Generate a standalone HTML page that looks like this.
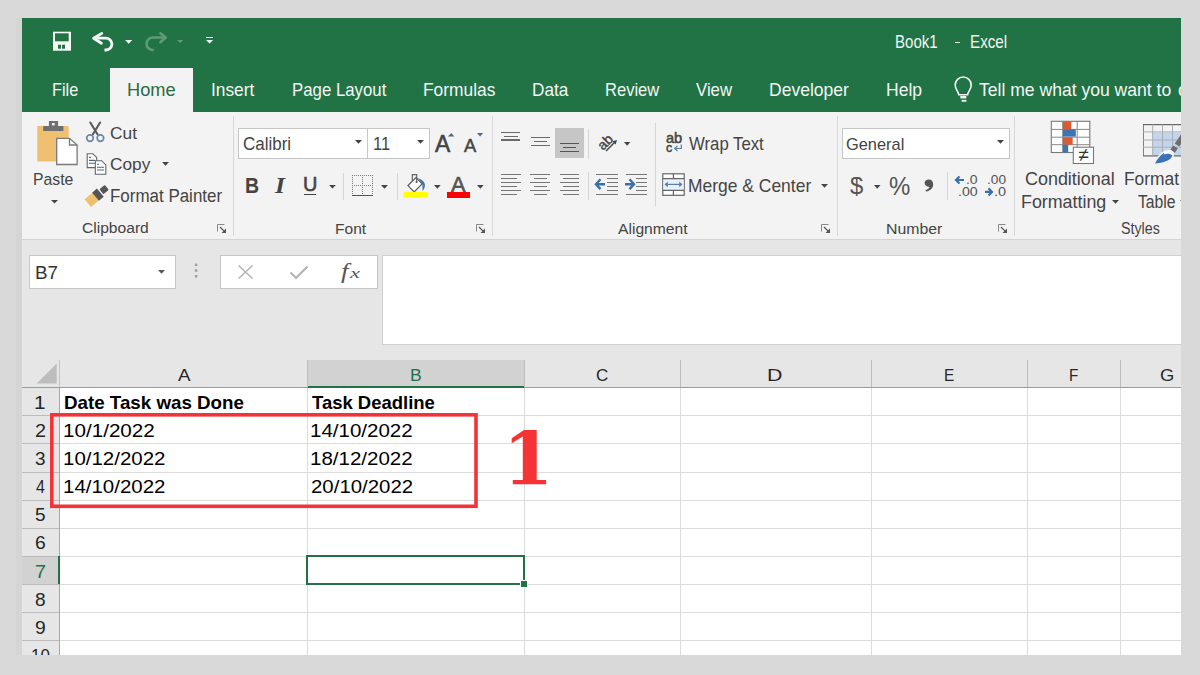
<!DOCTYPE html>
<html><head><meta charset="utf-8"><style>
html,body{margin:0;padding:0;width:1200px;height:675px;overflow:hidden;background:#d9d9d9;position:relative}
.t{position:absolute;white-space:nowrap;line-height:1;transform-origin:0 0;z-index:3}
svg{z-index:2}
#win{position:absolute;left:0;top:0;width:1181px;height:655px;overflow:hidden}
</style></head><body><div id="win">
<div style="position:absolute;left:16px;top:18px;width:6px;height:637px;background:#d5d5d5"></div>
<div style="position:absolute;left:22px;top:18px;width:1159px;height:637px;background:#217346"></div>
<div style="position:absolute;left:22px;top:112px;width:1159px;height:127px;background:#f3f3f3"></div>
<div style="position:absolute;left:22px;top:239px;width:1159px;height:1px;background:#d4d4d4"></div>
<div style="position:absolute;left:22px;top:240px;width:1159px;height:120px;background:#e6e6e6"></div>
<div style="position:absolute;left:110px;top:68px;width:83px;height:44px;background:#f3f3f3"></div>
<div class="t" style="left:894.50px;top:33px;font-size:18.48px;font-family:'Liberation Sans', sans-serif;font-weight:400;transform:scaleX(0.8148);color:#eef6f0;">Book1</div>
<div style="position:absolute;left:954.8px;top:41.6px;width:5.6px;height:1.7px;background:#eef6f0"></div>
<div class="t" style="left:969.78px;top:33px;font-size:18.48px;font-family:'Liberation Sans', sans-serif;font-weight:400;transform:scaleX(0.8235);color:#eef6f0;">Excel</div>
<div class="t" style="left:52.09px;top:82px;font-size:17.97px;font-family:'Liberation Sans', sans-serif;font-weight:400;transform:scaleX(0.9106);color:#f2f7f3;">File</div>
<div class="t" style="left:211.04px;top:82px;font-size:17.97px;font-family:'Liberation Sans', sans-serif;font-weight:400;transform:scaleX(0.9648);color:#f2f7f3;">Insert</div>
<div class="t" style="left:291.65px;top:82px;font-size:17.97px;font-family:'Liberation Sans', sans-serif;font-weight:400;transform:scaleX(0.9358);color:#f2f7f3;">Page Layout</div>
<div class="t" style="left:422.61px;top:82px;font-size:17.97px;font-family:'Liberation Sans', sans-serif;font-weight:400;transform:scaleX(0.9674);color:#f2f7f3;">Formulas</div>
<div class="t" style="left:531.62px;top:82px;font-size:17.97px;font-family:'Liberation Sans', sans-serif;font-weight:400;transform:scaleX(0.9594);color:#f2f7f3;">Data</div>
<div class="t" style="left:604.67px;top:82px;font-size:17.97px;font-family:'Liberation Sans', sans-serif;font-weight:400;transform:scaleX(0.9216);color:#f2f7f3;">Review</div>
<div class="t" style="left:695.92px;top:82px;font-size:17.97px;font-family:'Liberation Sans', sans-serif;font-weight:400;transform:scaleX(0.9339);color:#f2f7f3;">View</div>
<div class="t" style="left:769.10px;top:82px;font-size:17.97px;font-family:'Liberation Sans', sans-serif;font-weight:400;transform:scaleX(0.9757);color:#f2f7f3;">Developer</div>
<div class="t" style="left:885.59px;top:82px;font-size:17.97px;font-family:'Liberation Sans', sans-serif;font-weight:400;transform:scaleX(0.9777);color:#f2f7f3;">Help</div>
<div class="t" style="left:126.84px;top:82px;font-size:17.97px;font-family:'Liberation Sans', sans-serif;font-weight:400;transform:scaleX(1.0143);color:#2b6a45;">Home</div>
<div class="t" style="left:33.14px;top:172px;font-size:16.52px;font-family:'Liberation Sans', sans-serif;font-weight:400;transform:scaleX(0.9565);color:#444;">Paste</div>
<div class="t" style="left:110.13px;top:126px;font-size:15.94px;font-family:'Liberation Sans', sans-serif;font-weight:400;transform:scaleX(1.0873);color:#444;">Cut</div>
<div class="t" style="left:110.14px;top:157px;font-size:16.52px;font-family:'Liberation Sans', sans-serif;font-weight:400;transform:scaleX(1.0463);color:#444;">Copy</div>
<div class="t" style="left:110.24px;top:188px;font-size:17.83px;font-family:'Liberation Sans', sans-serif;font-weight:400;transform:scaleX(0.9506);color:#444;">Format Painter</div>
<div class="t" style="left:82.22px;top:220px;font-size:15.07px;font-family:'Liberation Sans', sans-serif;font-weight:400;transform:scaleX(1.0354);color:#444;">Clipboard</div>
<div class="t" style="left:242.65px;top:135px;font-size:18.91px;font-family:'Liberation Sans', sans-serif;font-weight:400;transform:scaleX(0.8978);color:#444;">Calibri</div>
<div class="t" style="left:372.69px;top:135px;font-size:18.91px;font-family:'Liberation Sans', sans-serif;font-weight:400;transform:scaleX(0.8702);color:#444;">11</div>
<div class="t" style="left:334.96px;top:222px;font-size:14.64px;font-family:'Liberation Sans', sans-serif;font-weight:400;transform:scaleX(1.0631);color:#444;">Font</div>
<div class="t" style="left:688.92px;top:134px;font-size:19.13px;font-family:'Liberation Sans', sans-serif;font-weight:400;transform:scaleX(0.8763);color:#444;">Wrap Text</div>
<div class="t" style="left:687.80px;top:176px;font-size:19.13px;font-family:'Liberation Sans', sans-serif;font-weight:400;transform:scaleX(0.9133);color:#444;">Merge &amp; Center</div>
<div class="t" style="left:618.30px;top:222px;font-size:14.93px;font-family:'Liberation Sans', sans-serif;font-weight:400;transform:scaleX(1.0479);color:#444;">Alignment</div>
<div class="t" style="left:845.78px;top:136px;font-size:17.39px;font-family:'Liberation Sans', sans-serif;font-weight:400;transform:scaleX(0.9427);color:#444;">General</div>
<div class="t" style="left:886.13px;top:222px;font-size:14.06px;font-family:'Liberation Sans', sans-serif;font-weight:400;transform:scaleX(1.1287);color:#444;">Number</div>
<div class="t" style="left:1025.30px;top:171px;font-size:17.68px;font-family:'Liberation Sans', sans-serif;font-weight:400;transform:scaleX(1.0142);color:#444;">Conditional</div>
<div class="t" style="left:1020.57px;top:193px;font-size:18.12px;font-family:'Liberation Sans', sans-serif;font-weight:400;transform:scaleX(0.9849);color:#444;">Formatting</div>
<div class="t" style="left:1124.11px;top:171px;font-size:17.68px;font-family:'Liberation Sans', sans-serif;font-weight:400;transform:scaleX(0.9833);color:#444;">Format</div>
<div class="t" style="left:1138.29px;top:193px;font-size:18.12px;font-family:'Liberation Sans', sans-serif;font-weight:400;transform:scaleX(0.8690);color:#444;">Table</div>
<div class="t" style="left:1121.36px;top:221px;font-size:15.65px;font-family:'Liberation Sans', sans-serif;font-weight:400;transform:scaleX(0.9118);color:#444;">Styles</div>
<svg style="position:absolute;left:50px;top:28px" width="30" height="26" viewBox="0 0 30 26"><rect x="3" y="3.7" width="18" height="19" fill="#f4faf6"/><rect x="5" y="5.3" width="13.7" height="8" fill="#217346"/><rect x="8" y="16.7" width="3" height="4" fill="#217346"/><rect x="12" y="16.7" width="3" height="4" fill="#217346"/></svg>
<svg style="position:absolute;left:88px;top:28px" width="30" height="26" viewBox="0 0 30 26"><path d="M13.8 5.4 L5.6 10.2 L13.4 15.2" fill="none" stroke="#f4faf6" stroke-width="2.8" stroke-linejoin="round" stroke-linecap="round"/><path d="M6.5 10.2 H18 A5.9 5.9 0 0 1 18 22 H16.5" fill="none" stroke="#f4faf6" stroke-width="2.8"/></svg>
<svg style="position:absolute;left:124.25px;top:38.85px" width="9.3" height="5.7" viewBox="0 0 9.3 5.7"><path d="M1 1 H8.3 L4.65 4.7 Z" fill="#f4faf6"/></svg>
<svg style="position:absolute;left:140px;top:28px" width="30" height="26" viewBox="0 0 30 26"><path d="M20.4 5.3 L25.8 9.5 L20.4 14.2" fill="none" stroke="#5d9c77" stroke-width="2.6" stroke-linejoin="round" stroke-linecap="round"/><path d="M25 9.5 H12.8 A6.25 6.25 0 0 0 12.8 22 H13.8" fill="none" stroke="#5d9c77" stroke-width="2.6"/></svg>
<svg style="position:absolute;left:176.45px;top:39.0px" width="8.3" height="5" viewBox="0 0 8.3 5"><path d="M1 1 H7.3 L4.15 4 Z" fill="#5d9c77"/></svg>
<div style="position:absolute;left:205.8px;top:36.6px;width:7.1px;height:1.4px;background:#f4faf6"></div>
<svg style="position:absolute;left:204.85px;top:39.0px" width="9.1" height="5.6" viewBox="0 0 9.1 5.6"><path d="M1 1 H8.1 L4.55 4.6 Z" fill="#f4faf6"/></svg>
<svg style="position:absolute;left:952px;top:74px" width="24" height="30" viewBox="0 0 24 30"><path d="M6.8 20.8 C6.5 17.5 3.2 15.5 3.2 11 A8 8 0 0 1 19.2 11 C19.2 15.5 15.9 17.5 15.6 20.8 Z" fill="none" stroke="#f4faf6" stroke-width="1.6"/><rect x="8.3" y="22" width="6" height="2.4" fill="#f4faf6"/><rect x="9.6" y="25.8" width="4.8" height="1.9" fill="#f4faf6"/></svg>
<div class="t" style="left:979.15px;top:81px;font-size:18.84px;font-family:'Liberation Sans', sans-serif;font-weight:400;transform:scaleX(0.9324);color:#f2f7f3;">Tell me what you want to</div>
<div class="t" style="left:1177.85px;top:81px;font-size:18.84px;font-family:'Liberation Sans', sans-serif;font-weight:400;transform:scaleX(0.9908);color:#f2f7f3;">d</div>
<div style="position:absolute;left:233px;top:116px;width:1px;height:120px;background:#d8d8d8"></div>
<div style="position:absolute;left:492px;top:116px;width:1px;height:120px;background:#d8d8d8"></div>
<div style="position:absolute;left:837px;top:116px;width:1px;height:120px;background:#d8d8d8"></div>
<div style="position:absolute;left:1014px;top:116px;width:1px;height:120px;background:#d8d8d8"></div>
<svg style="position:absolute;left:217px;top:224px" width="10" height="9" viewBox="0 0 10 9"><path d="M0.5 7.5 V0.5 H7.5" fill="none" stroke="#888" stroke-width="1"/><path d="M3 3 L8.3 8.3" stroke="#555" stroke-width="1.2"/><path d="M9 4.5 V9 H4.5 Z" fill="#555"/></svg>
<svg style="position:absolute;left:476.4px;top:224px" width="10" height="9" viewBox="0 0 10 9"><path d="M0.5 7.5 V0.5 H7.5" fill="none" stroke="#888" stroke-width="1"/><path d="M3 3 L8.3 8.3" stroke="#555" stroke-width="1.2"/><path d="M9 4.5 V9 H4.5 Z" fill="#555"/></svg>
<svg style="position:absolute;left:821px;top:224px" width="10" height="9" viewBox="0 0 10 9"><path d="M0.5 7.5 V0.5 H7.5" fill="none" stroke="#888" stroke-width="1"/><path d="M3 3 L8.3 8.3" stroke="#555" stroke-width="1.2"/><path d="M9 4.5 V9 H4.5 Z" fill="#555"/></svg>
<svg style="position:absolute;left:998.4px;top:224px" width="10" height="9" viewBox="0 0 10 9"><path d="M0.5 7.5 V0.5 H7.5" fill="none" stroke="#888" stroke-width="1"/><path d="M3 3 L8.3 8.3" stroke="#555" stroke-width="1.2"/><path d="M9 4.5 V9 H4.5 Z" fill="#555"/></svg>
<svg style="position:absolute;left:34px;top:118px" width="46" height="50" viewBox="0 0 46 50"><rect x="3.3" y="8" width="31.4" height="35.4" rx="1" fill="#efc070"/><path d="M14.9 3.1 H24.1 V8.1 H29.4 V12.9 H9.2 V8.1 H14.9 Z" fill="#6f6f6f"/><rect x="18" y="5" width="2.8" height="2.4" fill="#eee"/><path d="M22.7 20.3 H35.5 L43.1 27 V46.5 H22.7 Z" fill="#fff" stroke="#7a7a7a" stroke-width="1.3"/><path d="M35.5 20.3 V27 H43.1" fill="none" stroke="#7a7a7a" stroke-width="1.3"/></svg>
<svg style="position:absolute;left:49.5px;top:198.89999999999998px" width="9" height="5.6" viewBox="0 0 9 5.6"><path d="M1 1 H8 L4.5 4.6 Z" fill="#444"/></svg>
<svg style="position:absolute;left:82px;top:118px" width="26" height="28" viewBox="0 0 26 28"><path d="M8.3 4.5 L15.5 16.3 M18.1 4.5 L10.9 16.3" stroke="#5a5a5a" stroke-width="2.1" stroke-linecap="round"/><circle cx="8" cy="20.1" r="3.3" fill="none" stroke="#6a87a6" stroke-width="1.7"/><circle cx="18.4" cy="20.1" r="3.3" fill="none" stroke="#6a87a6" stroke-width="1.7"/></svg>
<svg style="position:absolute;left:84px;top:150px" width="26" height="28" viewBox="0 0 26 28"><path d="M3.2 3.7 H8.8 L12.7 7.6 V17.6 H3.2 Z" fill="#fff" stroke="#666" stroke-width="1.1"/><path d="M5 7.4 H7 M5 10.4 H11 M5 13.3 H11" stroke="#52667a" stroke-width="1.1"/><path d="M11.3 10.7 H17.6 L21.8 14.9 V24.2 H11.3 Z" fill="#fff" stroke="#666" stroke-width="1.1"/><path d="M13 14.2 H15 M13 17.3 H20 M13 20 H20" stroke="#52667a" stroke-width="1.1"/></svg>
<svg style="position:absolute;left:161.1px;top:161.29999999999998px" width="9" height="5.8" viewBox="0 0 9 5.8"><path d="M1 1 H8 L4.5 4.8 Z" fill="#444"/></svg>
<svg style="position:absolute;left:82px;top:182px" width="28" height="26" viewBox="0 0 28 26"><g transform="rotate(-40 14 13)"><rect x="2.5" y="9" width="10" height="10" fill="#eec06c"/><rect x="12.5" y="8.7" width="6.3" height="10.6" fill="#555"/><rect x="20.2" y="10.8" width="7" height="6.4" rx="1" fill="#555"/></g></svg>
<div style="position:absolute;left:238px;top:128px;width:192px;height:31px;background:#fff;box-sizing:border-box;border:1px solid #c6c6c6"></div>
<div style="position:absolute;left:367px;top:128px;width:1px;height:31px;background:#c6c6c6"></div>
<svg style="position:absolute;left:353.8px;top:139.0px" width="9" height="5.8" viewBox="0 0 9 5.8"><path d="M1 1 H8 L4.5 4.8 Z" fill="#444"/></svg>
<svg style="position:absolute;left:415.8px;top:139.0px" width="9" height="5.8" viewBox="0 0 9 5.8"><path d="M1 1 H8 L4.5 4.8 Z" fill="#444"/></svg>
<div class="t" style="left:434.60px;top:133px;font-size:23.48px;font-family:'Liberation Sans', sans-serif;font-weight:400;transform:scaleX(0.9735);-webkit-text-stroke:0.6px #444;color:#444;">A</div>
<div class="t" style="left:464.40px;top:136px;font-size:19.28px;font-family:'Liberation Sans', sans-serif;font-weight:400;transform:scaleX(0.9518);-webkit-text-stroke:0.5px #444;color:#444;">A</div>
<svg style="position:absolute;left:446.5px;top:132px" width="9" height="6" viewBox="0 0 9 6"><path d="M1 4.5 H7.4 L4.2 1 Z" fill="#4a6a8a"/></svg>
<svg style="position:absolute;left:475.59999999999997px;top:132.25px" width="8.2" height="5.5" viewBox="0 0 8.2 5.5"><path d="M1 1 H7.2 L4.1 4.5 Z" fill="#4a6a8a"/></svg>
<div class="t" style="left:244.93px;top:175px;font-size:22.46px;font-family:'Liberation Sans', sans-serif;font-weight:700;transform:scaleX(0.8684);color:#444;">B</div>
<div class="t" style="left:275.06px;top:174px;font-size:23.66px;font-family:'Liberation Serif', serif;font-weight:700;font-style:italic;transform:scaleX(1.0810);color:#444;">I</div>
<div class="t" style="left:302.74px;top:174px;font-size:20.58px;font-family:'Liberation Sans', sans-serif;font-weight:400;transform:scaleX(0.9667);-webkit-text-stroke:0.6px #444;color:#444;">U</div>
<div style="position:absolute;left:303.7px;top:193.6px;width:12.6px;height:1.3px;background:#444"></div>
<svg style="position:absolute;left:327.95px;top:184.29999999999998px" width="8.9" height="5.6" viewBox="0 0 8.9 5.6"><path d="M1 1 H7.9 L4.45 4.6 Z" fill="#444"/></svg>
<div style="position:absolute;left:343px;top:173px;width:1px;height:27px;background:#d5d5d5"></div>
<svg style="position:absolute;left:352px;top:175px" width="22" height="22" viewBox="0 0 22 22"><rect x="0" y="0" width="1" height="1" fill="#7a7a7a"/><rect x="0" y="0" width="1" height="1" fill="#7a7a7a"/><rect x="20" y="0" width="1" height="1" fill="#7a7a7a"/><rect x="0" y="10" width="1" height="1" fill="#7a7a7a"/><rect x="10" y="0" width="1" height="1" fill="#7a7a7a"/><rect x="2" y="0" width="1" height="1" fill="#7a7a7a"/><rect x="0" y="2" width="1" height="1" fill="#7a7a7a"/><rect x="20" y="2" width="1" height="1" fill="#7a7a7a"/><rect x="2" y="10" width="1" height="1" fill="#7a7a7a"/><rect x="10" y="2" width="1" height="1" fill="#7a7a7a"/><rect x="4" y="0" width="1" height="1" fill="#7a7a7a"/><rect x="0" y="4" width="1" height="1" fill="#7a7a7a"/><rect x="20" y="4" width="1" height="1" fill="#7a7a7a"/><rect x="4" y="10" width="1" height="1" fill="#7a7a7a"/><rect x="10" y="4" width="1" height="1" fill="#7a7a7a"/><rect x="6" y="0" width="1" height="1" fill="#7a7a7a"/><rect x="0" y="6" width="1" height="1" fill="#7a7a7a"/><rect x="20" y="6" width="1" height="1" fill="#7a7a7a"/><rect x="6" y="10" width="1" height="1" fill="#7a7a7a"/><rect x="10" y="6" width="1" height="1" fill="#7a7a7a"/><rect x="8" y="0" width="1" height="1" fill="#7a7a7a"/><rect x="0" y="8" width="1" height="1" fill="#7a7a7a"/><rect x="20" y="8" width="1" height="1" fill="#7a7a7a"/><rect x="8" y="10" width="1" height="1" fill="#7a7a7a"/><rect x="10" y="8" width="1" height="1" fill="#7a7a7a"/><rect x="10" y="0" width="1" height="1" fill="#7a7a7a"/><rect x="0" y="10" width="1" height="1" fill="#7a7a7a"/><rect x="20" y="10" width="1" height="1" fill="#7a7a7a"/><rect x="10" y="10" width="1" height="1" fill="#7a7a7a"/><rect x="10" y="10" width="1" height="1" fill="#7a7a7a"/><rect x="12" y="0" width="1" height="1" fill="#7a7a7a"/><rect x="0" y="12" width="1" height="1" fill="#7a7a7a"/><rect x="20" y="12" width="1" height="1" fill="#7a7a7a"/><rect x="12" y="10" width="1" height="1" fill="#7a7a7a"/><rect x="10" y="12" width="1" height="1" fill="#7a7a7a"/><rect x="14" y="0" width="1" height="1" fill="#7a7a7a"/><rect x="0" y="14" width="1" height="1" fill="#7a7a7a"/><rect x="20" y="14" width="1" height="1" fill="#7a7a7a"/><rect x="14" y="10" width="1" height="1" fill="#7a7a7a"/><rect x="10" y="14" width="1" height="1" fill="#7a7a7a"/><rect x="16" y="0" width="1" height="1" fill="#7a7a7a"/><rect x="0" y="16" width="1" height="1" fill="#7a7a7a"/><rect x="20" y="16" width="1" height="1" fill="#7a7a7a"/><rect x="16" y="10" width="1" height="1" fill="#7a7a7a"/><rect x="10" y="16" width="1" height="1" fill="#7a7a7a"/><rect x="18" y="0" width="1" height="1" fill="#7a7a7a"/><rect x="0" y="18" width="1" height="1" fill="#7a7a7a"/><rect x="20" y="18" width="1" height="1" fill="#7a7a7a"/><rect x="18" y="10" width="1" height="1" fill="#7a7a7a"/><rect x="10" y="18" width="1" height="1" fill="#7a7a7a"/><rect x="20" y="0" width="1" height="1" fill="#7a7a7a"/><rect x="0" y="20" width="1" height="1" fill="#7a7a7a"/><rect x="20" y="20" width="1" height="1" fill="#7a7a7a"/><rect x="20" y="10" width="1" height="1" fill="#7a7a7a"/><rect x="10" y="20" width="1" height="1" fill="#7a7a7a"/><rect x="0" y="20" width="21" height="1" fill="#555"/></svg>
<svg style="position:absolute;left:380.05px;top:184.1px" width="8.9" height="5.8" viewBox="0 0 8.9 5.8"><path d="M1 1 H7.9 L4.45 4.8 Z" fill="#444"/></svg>
<div style="position:absolute;left:396.5px;top:173px;width:1px;height:27px;background:#d5d5d5"></div>
<svg style="position:absolute;left:402px;top:172px" width="27" height="27" viewBox="0 0 27 27"><path d="M16 6 C20.5 7.5 23.2 10.5 23 13.5 C22.8 16 21.6 17.8 20.6 19.2 L20.3 11.8 Z" fill="#4a78a8"/><path d="M14 5.6 L20.2 11.8 L12.2 19.8 L6 13.6 Z" fill="#fff" stroke="#555" stroke-width="1.2"/><path d="M10.3 9.3 V2.6 H14.7 V9.6" fill="none" stroke="#666" stroke-width="1.2"/><circle cx="14.6" cy="10" r="1.1" fill="#555"/><rect x="1.6" y="19.9" width="23.6" height="5.7" fill="#ffff00"/></svg>
<svg style="position:absolute;left:432.84999999999997px;top:184.1px" width="8.7" height="5.8" viewBox="0 0 8.7 5.8"><path d="M1 1 H7.7 L4.35 4.8 Z" fill="#444"/></svg>
<div class="t" style="left:451.10px;top:174px;font-size:22.32px;font-family:'Liberation Sans', sans-serif;font-weight:400;transform:scaleX(0.9770);-webkit-text-stroke:0.6px #555;color:#555;">A</div>
<div style="position:absolute;left:447.1px;top:191.9px;width:23px;height:5.7px;background:#ff0000"></div>
<svg style="position:absolute;left:476.25px;top:184.1px" width="8.7" height="5.8" viewBox="0 0 8.7 5.8"><path d="M1 1 H7.7 L4.35 4.8 Z" fill="#444"/></svg>
<div style="position:absolute;left:501.25px;top:131.9px;width:19.149999999999977px;height:1.2px;background:#6a6a6a"></div><div style="position:absolute;left:504.2px;top:135.8px;width:13.699999999999989px;height:1.2px;background:#6a6a6a"></div><div style="position:absolute;left:501.25px;top:139.4px;width:19.149999999999977px;height:1.2px;background:#6a6a6a"></div>
<div style="position:absolute;left:530.8px;top:137.3px;width:19.200000000000045px;height:1.2px;background:#6a6a6a"></div><div style="position:absolute;left:533.75px;top:141.3px;width:12.950000000000045px;height:1.2px;background:#6a6a6a"></div><div style="position:absolute;left:530.8px;top:145.2px;width:19.200000000000045px;height:1.2px;background:#6a6a6a"></div>
<div style="position:absolute;left:555px;top:128.25px;width:28.75px;height:29.5px;background:#c6c6c6"></div>
<div style="position:absolute;left:560px;top:143.3px;width:18.75px;height:1.2px;background:#555"></div><div style="position:absolute;left:562.5px;top:147.2px;width:13.299999999999955px;height:1.2px;background:#555"></div><div style="position:absolute;left:560px;top:150.8px;width:18.75px;height:1.2px;background:#555"></div>
<div style="position:absolute;left:588px;top:128.5px;width:1px;height:30px;background:#d5d5d5"></div>
<div style="position:absolute;left:501px;top:174.2px;width:20px;height:1.2px;background:#777"></div><div style="position:absolute;left:501px;top:178.1px;width:16px;height:1.2px;background:#777"></div><div style="position:absolute;left:501px;top:182.0px;width:20px;height:1.2px;background:#777"></div><div style="position:absolute;left:501px;top:185.9px;width:16px;height:1.2px;background:#777"></div><div style="position:absolute;left:501px;top:189.9px;width:20px;height:1.2px;background:#777"></div><div style="position:absolute;left:501px;top:193.8px;width:16px;height:1.2px;background:#777"></div>
<div style="position:absolute;left:530.3px;top:174.2px;width:19.40000000000009px;height:1.2px;background:#777"></div><div style="position:absolute;left:533.7px;top:178.1px;width:13.299999999999955px;height:1.2px;background:#777"></div><div style="position:absolute;left:530.3px;top:182.0px;width:19.40000000000009px;height:1.2px;background:#777"></div><div style="position:absolute;left:533.7px;top:185.9px;width:13.299999999999955px;height:1.2px;background:#777"></div><div style="position:absolute;left:530.3px;top:189.9px;width:19.40000000000009px;height:1.2px;background:#777"></div><div style="position:absolute;left:533.7px;top:193.8px;width:13.299999999999955px;height:1.2px;background:#777"></div>
<div style="position:absolute;left:559.7px;top:174.2px;width:19.299999999999955px;height:1.2px;background:#777"></div><div style="position:absolute;left:563px;top:178.1px;width:16px;height:1.2px;background:#777"></div><div style="position:absolute;left:559.7px;top:182.0px;width:19.299999999999955px;height:1.2px;background:#777"></div><div style="position:absolute;left:563px;top:185.9px;width:16px;height:1.2px;background:#777"></div><div style="position:absolute;left:559.7px;top:189.9px;width:19.299999999999955px;height:1.2px;background:#777"></div><div style="position:absolute;left:563px;top:193.8px;width:16px;height:1.2px;background:#777"></div>
<div style="position:absolute;left:588px;top:172px;width:1px;height:28px;background:#d5d5d5"></div>
<div style="position:absolute;left:596.3px;top:174.2px;width:21.40000000000009px;height:1.2px;background:#777"></div><div style="position:absolute;left:596.3px;top:193.8px;width:21.40000000000009px;height:1.2px;background:#777"></div><div style="position:absolute;left:607px;top:178.1px;width:10.700000000000045px;height:1.2px;background:#777"></div><div style="position:absolute;left:607px;top:182.0px;width:10.700000000000045px;height:1.2px;background:#777"></div><div style="position:absolute;left:607px;top:185.9px;width:10.700000000000045px;height:1.2px;background:#777"></div><div style="position:absolute;left:607px;top:189.9px;width:10.700000000000045px;height:1.2px;background:#777"></div>
<div style="position:absolute;left:625.7px;top:174.2px;width:21.299999999999955px;height:1.2px;background:#777"></div><div style="position:absolute;left:625.7px;top:193.8px;width:21.299999999999955px;height:1.2px;background:#777"></div><div style="position:absolute;left:636.3px;top:178.1px;width:10.700000000000045px;height:1.2px;background:#777"></div><div style="position:absolute;left:636.3px;top:182.0px;width:10.700000000000045px;height:1.2px;background:#777"></div><div style="position:absolute;left:636.3px;top:185.9px;width:10.700000000000045px;height:1.2px;background:#777"></div><div style="position:absolute;left:636.3px;top:189.9px;width:10.700000000000045px;height:1.2px;background:#777"></div>
<svg style="position:absolute;left:594px;top:178px" width="12" height="12" viewBox="0 0 12 12"><path d="M6.5 1.3 L2 6.2 L6.5 11.1 M2.5 6.2 H11" fill="none" stroke="#3a70aa" stroke-width="2.4"/></svg>
<svg style="position:absolute;left:624px;top:178px" width="12" height="12" viewBox="0 0 12 12"><path d="M5.5 1.3 L10 6.2 L5.5 11.1 M9.5 6.2 H1" fill="none" stroke="#3a70aa" stroke-width="2.4"/></svg>
<div style="position:absolute;left:655px;top:123px;width:1px;height:83px;background:#d5d5d5"></div>
<div class="t" style="left:594px;top:131px;font-size:14px;font-family:'Liberation Sans';color:#444;-webkit-text-stroke:0.4px #444;transform:rotate(-45deg);transform-origin:50% 50%;width:22px;height:22px;line-height:22px;text-align:center">ab</div>
<svg style="position:absolute;left:603px;top:137px" width="16" height="16" viewBox="0 0 16 16"><path d="M3 14 L12.5 4.5" stroke="#444" stroke-width="1.4"/><path d="M14 3 L9.5 4.3 L12.7 7.5 Z" fill="#444"/></svg>
<svg style="position:absolute;left:623.0500000000001px;top:140.65px" width="8.3" height="5.7" viewBox="0 0 8.3 5.7"><path d="M1 1 H7.3 L4.15 4.7 Z" fill="#444"/></svg>
<div class="t" style="left:666.38px;top:131px;font-size:14.20px;font-family:'Liberation Sans', sans-serif;font-weight:400;transform:scaleX(1.0296);-webkit-text-stroke:0.5px #444;color:#444;">ab</div>
<div class="t" style="left:665.70px;top:141px;font-size:13.00px;font-family:'Liberation Sans', sans-serif;font-weight:400;transform:scaleX(0.9549);-webkit-text-stroke:0.5px #444;color:#444;">c</div>
<svg style="position:absolute;left:673px;top:143px" width="10" height="10" viewBox="0 0 10 10"><path d="M8.3 1.5 V5.5 H2.2" fill="none" stroke="#5a7fa0" stroke-width="1.2"/><path d="M4.5 3 L1.7 5.5 L4.5 8" fill="none" stroke="#5a7fa0" stroke-width="1.2"/></svg>
<svg style="position:absolute;left:661px;top:172px" width="25" height="25" viewBox="0 0 25 25"><rect x="1.8" y="1.8" width="21.4" height="21.5" fill="#fff" stroke="#666" stroke-width="1.2"/><rect x="2.4" y="6.9" width="20.2" height="11.3" fill="#e6f1fa"/><path d="M1.8 6.6 H23.2 M1.8 18.3 H23.2 M12.4 1.8 V6.6 M12.4 18.3 V23.3" stroke="#666" stroke-width="1.2"/><path d="M4.5 12.4 H20.5" stroke="#5a7fa0" stroke-width="1.2"/><path d="M6.8 9.6 L3.6 12.4 L6.8 15.2 Z M18.2 9.6 L21.4 12.4 L18.2 15.2 Z" fill="#5a7fa0"/></svg>
<svg style="position:absolute;left:819.7px;top:183.4px" width="9" height="5.8" viewBox="0 0 9 5.8"><path d="M1 1 H8 L4.5 4.8 Z" fill="#444"/></svg>
<div style="position:absolute;left:842px;top:128.4px;width:167.6px;height:30.2px;background:#fff;box-sizing:border-box;border:1px solid #c6c6c6"></div>
<svg style="position:absolute;left:995.8px;top:139.2px" width="9" height="5.8" viewBox="0 0 9 5.8"><path d="M1 1 H8 L4.5 4.8 Z" fill="#444"/></svg>
<div class="t" style="left:849.76px;top:175px;font-size:23.19px;font-family:'Liberation Sans', sans-serif;font-weight:400;transform:scaleX(1.0252);color:#555;">$</div>
<svg style="position:absolute;left:873.15px;top:183.65px" width="8.5" height="5.7" viewBox="0 0 8.5 5.7"><path d="M1 1 H7.5 L4.25 4.7 Z" fill="#444"/></svg>
<div class="t" style="left:888.66px;top:174px;font-size:25.14px;font-family:'Liberation Sans', sans-serif;font-weight:400;transform:scaleX(0.9554);color:#555;">%</div>
<svg style="position:absolute;left:922px;top:177px" width="14" height="17" viewBox="0 0 14 17"><path d="M6.8 2.6 C9.3 2.6 11.2 4.4 11.2 7.2 C11.2 10.8 8.6 13.6 4 14.6 L3.4 13.3 C6 12.3 7.3 11 7.6 9.9 C4.6 9.8 2.6 8.3 2.6 6.1 C2.6 4 4.4 2.6 6.8 2.6 Z" fill="#555"/></svg>
<div style="position:absolute;left:947px;top:172px;width:1px;height:28px;background:#d5d5d5"></div>
<div class="t" style="left:965.75px;top:174px;font-size:12.60px;font-family:'Liberation Sans', sans-serif;font-weight:400;transform:scaleX(1.1066);color:#555;">.0</div>
<div class="t" style="left:957.73px;top:186px;font-size:12.60px;font-family:'Liberation Sans', sans-serif;font-weight:400;transform:scaleX(1.1230);color:#555;">.00</div>
<div class="t" style="left:987.27px;top:174px;font-size:12.60px;font-family:'Liberation Sans', sans-serif;font-weight:400;transform:scaleX(1.0854);color:#555;">.00</div>
<div class="t" style="left:994.19px;top:186px;font-size:12.60px;font-family:'Liberation Sans', sans-serif;font-weight:400;transform:scaleX(1.1514);color:#555;">.0</div>
<svg style="position:absolute;left:954px;top:174px" width="12" height="12" viewBox="0 0 12 12"><path d="M5.5 2.5 L2 6 L5.5 9.5 M2.5 6 H10" fill="none" stroke="#3a70aa" stroke-width="2.2"/></svg>
<svg style="position:absolute;left:984px;top:186px" width="12" height="12" viewBox="0 0 12 12"><path d="M4.5 2.3 L8 5.9 L4.5 9.5 M7.5 5.9 H1" fill="none" stroke="#3a70aa" stroke-width="2.2"/></svg>
<svg style="position:absolute;left:1050px;top:120px" width="46" height="46" viewBox="0 0 46 46"><rect x="1.3" y="1.3" width="38.5" height="31.2" fill="#fff" stroke="#777" stroke-width="1.1"/><path d="M1.3 9.4 H39.8" stroke="#888" stroke-width="1"/><path d="M1.3 17.2 H39.8" stroke="#888" stroke-width="1"/><path d="M1.3 24.7 H39.8" stroke="#888" stroke-width="1"/><path d="M12.7 1.3 V32.5" stroke="#888" stroke-width="1"/><path d="M27.2 1.3 V32.5" stroke="#888" stroke-width="1"/><rect x="12.9" y="1.3" width="8.4" height="8.1" fill="#dc5a30"/><rect x="12.9" y="9.4" width="12.9" height="7.2" fill="#3f74b3"/><rect x="12.9" y="17.2" width="9.75" height="7.5" fill="#dc5a30"/><rect x="12.9" y="24.7" width="5.3" height="7.8" fill="#3f74b3"/><rect x="23.3" y="27.2" width="20.2" height="16.3" fill="#fff" stroke="#777" stroke-width="1.1"/><text x="33.4" y="41" font-family="Liberation Sans" font-size="19" text-anchor="middle" fill="#333">≠</text></svg>
<svg style="position:absolute;left:1143px;top:120px" width="50" height="48" viewBox="0 0 50 48"><rect x="9.3" y="12.6" width="40" height="23" fill="#c4d5eb"/><rect x="0.2" y="4.6" width="50" height="31.3" fill="none" stroke="#666" stroke-width="1.2"/><path d="M0.2 11.9 H50" stroke="#a8aeb6" stroke-width="1"/><path d="M0.2 20 H50" stroke="#a8aeb6" stroke-width="1"/><path d="M0.2 27.2 H50" stroke="#a8aeb6" stroke-width="1"/><path d="M9.7 4.6 V35.9" stroke="#a8aeb6" stroke-width="1"/><path d="M19.5 4.6 V35.9" stroke="#a8aeb6" stroke-width="1"/><path d="M29.5 4.6 V35.9" stroke="#a8aeb6" stroke-width="1"/><path d="M41 15 L34 25" stroke="#6d6d6d" stroke-width="5.5"/><path d="M32.6 27 L29.6 31.2" stroke="#6d6d6d" stroke-width="5.5"/><path d="M10.4 44.6 C13.5 38.5 17.5 33 23 31 C27.5 29.5 31 32 30 36 C28.5 41 20 43.8 10.4 44.6 Z" fill="#3b72b9" stroke="#f3f3f3" stroke-width="1.6"/><path d="M21.5 32 C26 29.8 30.6 31.5 29.8 35.6 C27 33.5 24.5 33.2 20.5 34.4 Z" fill="#fff"/></svg>
<svg style="position:absolute;left:1110.7px;top:198.6px" width="9" height="5.8" viewBox="0 0 9 5.8"><path d="M1 1 H8 L4.5 4.8 Z" fill="#444"/></svg>
<svg style="position:absolute;left:1178.7px;top:198.6px" width="9" height="5.8" viewBox="0 0 9 5.8"><path d="M1 1 H8 L4.5 4.8 Z" fill="#444"/></svg>
<svg style="position:absolute;left:156.8px;top:268.90000000000003px" width="9" height="5.8" viewBox="0 0 9 5.8"><path d="M1 1 H8 L4.5 4.8 Z" fill="#555"/></svg>
<svg style="position:absolute;left:193px;top:262px" width="6" height="18" viewBox="0 0 6 18"><rect x="1.8" y="1.6" width="2.5" height="2.5" fill="#a0a0a0"/><rect x="1.8" y="7.3" width="2.5" height="2.5" fill="#a0a0a0"/><rect x="1.8" y="13" width="2.5" height="2.5" fill="#a0a0a0"/></svg>
<svg style="position:absolute;left:236px;top:263px" width="20" height="18" viewBox="0 0 20 18"><path d="M2.5 2.5 L16.5 15.5 M16.5 2.5 L2.5 15.5" stroke="#b5b5b5" stroke-width="1.6"/></svg>
<svg style="position:absolute;left:288px;top:263px" width="22" height="18" viewBox="0 0 22 18"><path d="M2.5 9.5 L8 15 L19.5 3.5" fill="none" stroke="#b5b5b5" stroke-width="2.2"/></svg>
<div class="t" style="left:340.93px;top:260px;font-size:22.00px;font-family:'Liberation Serif', serif;font-weight:400;font-style:italic;transform:scaleX(1.2161);color:#555;">f</div>
<div class="t" style="left:350.34px;top:266px;font-size:15.00px;font-family:'Liberation Serif', serif;font-weight:400;font-style:italic;transform:scaleX(1.5111);color:#555;">x</div>
<div style="position:absolute;left:29px;top:255px;width:147px;height:34px;background:#fff;box-sizing:border-box;border:1px solid #c6c6c6"></div>
<div style="position:absolute;left:220px;top:255px;width:158px;height:34px;background:#fff;box-sizing:border-box;border:1px solid #c6c6c6"></div>
<div style="position:absolute;left:382px;top:255px;width:820px;height:90px;background:#fff;box-sizing:border-box;border:1px solid #cfcfcf"></div>
<div class="t" style="left:34.74px;top:264px;font-size:18.41px;font-family:'Liberation Sans', sans-serif;font-weight:400;transform:scaleX(1.0243);color:#333;">B7</div>
<div style="position:absolute;left:22px;top:360px;width:1159px;height:295px;background:#fff"></div>
<div style="position:absolute;left:22px;top:360px;width:37px;height:295px;background:#e6e6e6"></div>
<div style="position:absolute;left:22px;top:360px;width:1159px;height:27px;background:#e6e6e6"></div>
<div style="position:absolute;left:308px;top:360px;width:216px;height:27px;background:#d2d2d2"></div>
<div style="position:absolute;left:22px;top:555.92px;width:37px;height:28.120000000000005px;background:#d2d2d2"></div>
<div style="position:absolute;left:22px;top:415px;width:37px;height:1px;background:#bcbcbc"></div>
<div style="position:absolute;left:60px;top:415px;width:1121px;height:1px;background:#dcdcdc"></div>
<div style="position:absolute;left:22px;top:443px;width:37px;height:1px;background:#bcbcbc"></div>
<div style="position:absolute;left:60px;top:443px;width:1121px;height:1px;background:#dcdcdc"></div>
<div style="position:absolute;left:22px;top:472px;width:37px;height:1px;background:#bcbcbc"></div>
<div style="position:absolute;left:60px;top:472px;width:1121px;height:1px;background:#dcdcdc"></div>
<div style="position:absolute;left:22px;top:500px;width:37px;height:1px;background:#bcbcbc"></div>
<div style="position:absolute;left:60px;top:500px;width:1121px;height:1px;background:#dcdcdc"></div>
<div style="position:absolute;left:22px;top:528px;width:37px;height:1px;background:#bcbcbc"></div>
<div style="position:absolute;left:60px;top:528px;width:1121px;height:1px;background:#dcdcdc"></div>
<div style="position:absolute;left:22px;top:556px;width:37px;height:1px;background:#bcbcbc"></div>
<div style="position:absolute;left:60px;top:556px;width:1121px;height:1px;background:#dcdcdc"></div>
<div style="position:absolute;left:22px;top:584px;width:37px;height:1px;background:#bcbcbc"></div>
<div style="position:absolute;left:60px;top:584px;width:1121px;height:1px;background:#dcdcdc"></div>
<div style="position:absolute;left:22px;top:612px;width:37px;height:1px;background:#bcbcbc"></div>
<div style="position:absolute;left:60px;top:612px;width:1121px;height:1px;background:#dcdcdc"></div>
<div style="position:absolute;left:22px;top:640px;width:37px;height:1px;background:#bcbcbc"></div>
<div style="position:absolute;left:60px;top:640px;width:1121px;height:1px;background:#dcdcdc"></div>
<div style="position:absolute;left:22px;top:668px;width:37px;height:1px;background:#bcbcbc"></div>
<div style="position:absolute;left:60px;top:668px;width:1121px;height:1px;background:#dcdcdc"></div>
<div style="position:absolute;left:307px;top:360px;width:1px;height:27px;background:#bdbdbd"></div>
<div style="position:absolute;left:307px;top:388px;width:1px;height:268px;background:#dcdcdc"></div>
<div style="position:absolute;left:524px;top:360px;width:1px;height:27px;background:#bdbdbd"></div>
<div style="position:absolute;left:524px;top:388px;width:1px;height:268px;background:#dcdcdc"></div>
<div style="position:absolute;left:680px;top:360px;width:1px;height:27px;background:#bdbdbd"></div>
<div style="position:absolute;left:680px;top:388px;width:1px;height:268px;background:#dcdcdc"></div>
<div style="position:absolute;left:871px;top:360px;width:1px;height:27px;background:#bdbdbd"></div>
<div style="position:absolute;left:871px;top:388px;width:1px;height:268px;background:#dcdcdc"></div>
<div style="position:absolute;left:1027px;top:360px;width:1px;height:27px;background:#bdbdbd"></div>
<div style="position:absolute;left:1027px;top:388px;width:1px;height:268px;background:#dcdcdc"></div>
<div style="position:absolute;left:1120px;top:360px;width:1px;height:27px;background:#bdbdbd"></div>
<div style="position:absolute;left:1120px;top:388px;width:1px;height:268px;background:#dcdcdc"></div>
<div style="position:absolute;left:59px;top:360px;width:1px;height:27px;background:#c4c4c4"></div>
<div style="position:absolute;left:59px;top:387px;width:1px;height:268px;background:#a8a8a8"></div>
<div style="position:absolute;left:22px;top:387px;width:1159px;height:1px;background:#9b9b9b"></div>
<div style="position:absolute;left:308px;top:386px;width:216px;height:2px;background:#217346"></div>
<div style="position:absolute;left:58px;top:555.92px;width:2px;height:28.120000000000005px;background:#217346"></div>
<svg style="position:absolute;left:36px;top:363px" width="22" height="22" viewBox="0 0 22 22"><path d="M0.7 20.6 L20.7 20.6 L20.7 0.5 Z" fill="#bdbdbd"/></svg>
<div class="t" style="left:178.00px;top:367px;font-size:17.39px;font-family:'Liberation Sans', sans-serif;font-weight:400;transform:scaleX(1.0808);color:#262626;">A</div>
<div class="t" style="left:409.89px;top:367px;font-size:17.39px;font-family:'Liberation Sans', sans-serif;font-weight:400;transform:scaleX(1.0103);color:#217346;">B</div>
<div class="t" style="left:595.65px;top:367px;font-size:17.39px;font-family:'Liberation Sans', sans-serif;font-weight:400;transform:scaleX(0.9780);color:#262626;">C</div>
<div class="t" style="left:767.09px;top:367px;font-size:17.39px;font-family:'Liberation Sans', sans-serif;font-weight:400;transform:scaleX(1.2273);color:#262626;">D</div>
<div class="t" style="left:943.77px;top:367px;font-size:17.39px;font-family:'Liberation Sans', sans-serif;font-weight:400;transform:scaleX(0.8862);color:#262626;">E</div>
<div class="t" style="left:1069.28px;top:367px;font-size:17.39px;font-family:'Liberation Sans', sans-serif;font-weight:400;transform:scaleX(0.8801);color:#262626;">F</div>
<div class="t" style="left:1160.08px;top:367px;font-size:17.39px;font-family:'Liberation Sans', sans-serif;font-weight:400;transform:scaleX(1.0534);color:#262626;">G</div>
<div class="t" style="left:33.85px;top:394px;font-size:18.55px;font-family:'Liberation Sans', sans-serif;font-weight:400;transform:scaleX(1.1153);color:#262626;">1</div>
<div class="t" style="left:35.21px;top:422px;font-size:18.55px;font-family:'Liberation Sans', sans-serif;font-weight:400;transform:scaleX(1.0663);color:#262626;">2</div>
<div class="t" style="left:35.44px;top:450px;font-size:18.55px;font-family:'Liberation Sans', sans-serif;font-weight:400;transform:scaleX(1.0214);color:#262626;">3</div>
<div class="t" style="left:35.84px;top:478px;font-size:18.55px;font-family:'Liberation Sans', sans-serif;font-weight:400;transform:scaleX(0.8646);color:#262626;">4</div>
<div class="t" style="left:35.44px;top:506px;font-size:18.55px;font-family:'Liberation Sans', sans-serif;font-weight:400;transform:scaleX(1.0214);color:#262626;">5</div>
<div class="t" style="left:35.23px;top:534px;font-size:18.55px;font-family:'Liberation Sans', sans-serif;font-weight:400;transform:scaleX(1.0433);color:#262626;">6</div>
<div class="t" style="left:35.21px;top:563px;font-size:18.55px;font-family:'Liberation Sans', sans-serif;font-weight:400;transform:scaleX(1.0663);color:#217346;">7</div>
<div class="t" style="left:35.34px;top:591px;font-size:18.55px;font-family:'Liberation Sans', sans-serif;font-weight:400;transform:scaleX(1.0322);color:#262626;">8</div>
<div class="t" style="left:35.33px;top:619px;font-size:18.55px;font-family:'Liberation Sans', sans-serif;font-weight:400;transform:scaleX(1.0433);color:#262626;">9</div>
<div class="t" style="left:30.93px;top:647px;font-size:18.55px;font-family:'Liberation Sans', sans-serif;font-weight:400;transform:scaleX(0.9164);color:#262626;">10</div>
<div class="t" style="left:64.18px;top:393px;font-size:19.28px;font-family:'Liberation Sans', sans-serif;font-weight:700;transform:scaleX(0.9731);color:#000;">Date Task was Done</div>
<div class="t" style="left:311.72px;top:393px;font-size:19.28px;font-family:'Liberation Sans', sans-serif;font-weight:700;transform:scaleX(0.9590);color:#000;">Task Deadline</div>
<div class="t" style="left:63.15px;top:422px;font-size:18.84px;font-family:'Liberation Sans', sans-serif;font-weight:400;transform:scaleX(1.0959);color:#000;">10/1/2022</div>
<div class="t" style="left:310.36px;top:422px;font-size:18.84px;font-family:'Liberation Sans', sans-serif;font-weight:400;transform:scaleX(1.0898);color:#000;">14/10/2022</div>
<div class="t" style="left:63.16px;top:450px;font-size:18.84px;font-family:'Liberation Sans', sans-serif;font-weight:400;transform:scaleX(1.0876);color:#000;">10/12/2022</div>
<div class="t" style="left:310.36px;top:450px;font-size:18.84px;font-family:'Liberation Sans', sans-serif;font-weight:400;transform:scaleX(1.0898);color:#000;">18/12/2022</div>
<div class="t" style="left:63.16px;top:478px;font-size:18.84px;font-family:'Liberation Sans', sans-serif;font-weight:400;transform:scaleX(1.0876);color:#000;">14/10/2022</div>
<div class="t" style="left:310.88px;top:478px;font-size:18.84px;font-family:'Liberation Sans', sans-serif;font-weight:400;transform:scaleX(1.0843);color:#000;">20/10/2022</div>
<div style="position:absolute;left:306px;top:555px;width:219px;height:30px;box-sizing:border-box;border:2px solid #217346"></div>
<div style="position:absolute;left:521px;top:581px;width:6px;height:6px;background:#217346;outline:1px solid #fff"></div>
<svg style="position:absolute;left:48px;top:411px" width="432" height="100" viewBox="0 0 432 100"><rect x="3.8" y="3.8" width="424.2" height="91.5" fill="none" stroke="#f23337" stroke-width="3.6"/></svg>
<svg style="position:absolute;left:500px;top:420px" width="60" height="75" viewBox="0 0 60 75"><path d="M11.7 18.3 L24 10 H36.7 V60 H46.1 V64.2 H12.8 V60 H22.8 V16.6 L11.7 23.3 Z" fill="#f53234"/></svg>
</div></body></html>
